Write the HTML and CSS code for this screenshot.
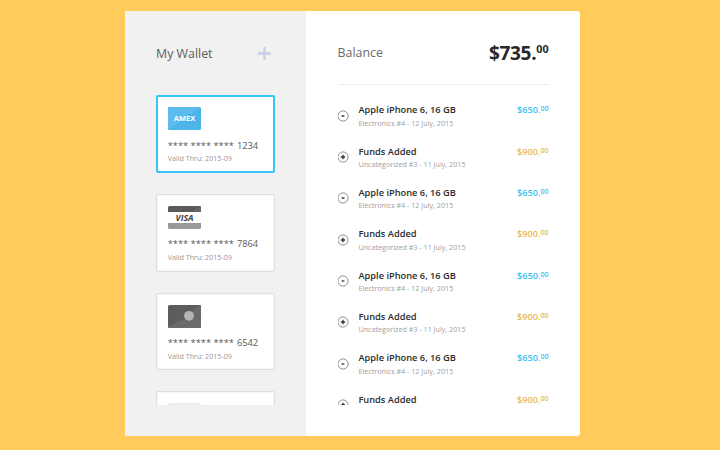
FILE: index.html
```html
<!DOCTYPE html>
<html lang="en">
<head>
<meta charset="utf-8">
<title>My Wallet</title>
<link rel="stylesheet" href="styles.css">
</head>
<body>
<main class="panel">
  <section class="wallet">
    <header class="wallet-head">
      <h1 class="heading">My Wallet</h1>
      <svg class="add" viewBox="0 0 13 13"><path d="M6.500 0v13M0 6.500h13"/></svg>
    </header>
    <div class="cards">
      <article class="card active">
        <svg class="logo" viewBox="0 0 33 23"><rect width="33" height="23" rx="1.5" fill="#4bb5ea"/><path d="M0 23V1.500Q0 0 1.500 0H33z" fill="#5dbcee"/><text class="amex" x="16.500" y="14.300" textLength="21.500" lengthAdjust="spacingAndGlyphs">AMEX</text></svg>
        <p class="number"><span class="stars">**** **** ****</span><span>1234</span></p>
        <p class="valid">Valid Thru: 2015-09</p>
      </article>
      <article class="card">
        <svg class="logo" viewBox="0 0 33 23"><path d="M0 6V1.500Q0 0 1.500 0h30Q33 0 33 1.500V6z" fill="#5b5b5b"/><path d="M24.500 6L33 0v6z" fill="#696969"/><path d="M0 17h33v4.500q0 1.500-1.500 1.500h-30Q0 23 0 21.500z" fill="#999"/><text class="visa" x="16.500" y="14.700" textLength="18" lengthAdjust="spacingAndGlyphs">VISA</text></svg>
        <p class="number"><span class="stars">**** **** ****</span><span>7864</span></p>
        <p class="valid">Valid Thru: 2015-09</p>
      </article>
      <article class="card">
        <svg class="logo" viewBox="0 0 33 23"><rect width="33" height="23" rx="1.500" fill="#5c5c5c"/><path d="M0 23L33 0v21.500q0 1.500-1.500 1.500z" fill="#6a6a6a"/><circle cx="12.500" cy="11" r="5" fill="#5f5f5f"/><circle cx="21" cy="10.800" r="4.900" fill="#b5b5b5"/></svg>
        <p class="number"><span class="stars">**** **** ****</span><span>6542</span></p>
        <p class="valid">Valid Thru: 2015-09</p>
      </article>
      <article class="card">
        <svg class="logo" viewBox="0 0 33 23"><rect width="33" height="23" rx="1.500" fill="#eee"/></svg>
      </article>
    </div>
  </section>
  <section class="balance">
    <header class="balance-head">
      <h2 class="heading">Balance</h2>
      <p class="total">$735.<span class="total-cents">00</span></p>
    </header>
    <ul class="list">
      <li class="row"><svg class="sign" viewBox="0 0 12 12"><circle cx="6" cy="6" r="5.100"/><path d="M4.600 6h2.800"/></svg><div class="info"><h3 class="title">Apple iPhone 6, 16 GB</h3><p class="meta">Electronics #4 - 12 July, 2015</p></div><p class="amount">$650.<span class="cents">00</span></p></li>
      <li class="row added"><svg class="sign" viewBox="0 0 12 12"><circle cx="6" cy="6" r="5.100"/><path d="M3.800 6h4.400M6 3.800v4.400"/></svg><div class="info"><h3 class="title">Funds Added</h3><p class="meta">Uncategorized #3 - 11 July, 2015</p></div><p class="amount">$900.<span class="cents">00</span></p></li>
      <li class="row"><svg class="sign" viewBox="0 0 12 12"><circle cx="6" cy="6" r="5.100"/><path d="M4.600 6h2.800"/></svg><div class="info"><h3 class="title">Apple iPhone 6, 16 GB</h3><p class="meta">Electronics #4 - 12 July, 2015</p></div><p class="amount">$650.<span class="cents">00</span></p></li>
      <li class="row added"><svg class="sign" viewBox="0 0 12 12"><circle cx="6" cy="6" r="5.100"/><path d="M3.800 6h4.400M6 3.800v4.400"/></svg><div class="info"><h3 class="title">Funds Added</h3><p class="meta">Uncategorized #3 - 11 July, 2015</p></div><p class="amount">$900.<span class="cents">00</span></p></li>
      <li class="row"><svg class="sign" viewBox="0 0 12 12"><circle cx="6" cy="6" r="5.100"/><path d="M4.600 6h2.800"/></svg><div class="info"><h3 class="title">Apple iPhone 6, 16 GB</h3><p class="meta">Electronics #4 - 12 July, 2015</p></div><p class="amount">$650.<span class="cents">00</span></p></li>
      <li class="row added"><svg class="sign" viewBox="0 0 12 12"><circle cx="6" cy="6" r="5.100"/><path d="M3.800 6h4.400M6 3.800v4.400"/></svg><div class="info"><h3 class="title">Funds Added</h3><p class="meta">Uncategorized #3 - 11 July, 2015</p></div><p class="amount">$900.<span class="cents">00</span></p></li>
      <li class="row"><svg class="sign" viewBox="0 0 12 12"><circle cx="6" cy="6" r="5.100"/><path d="M4.600 6h2.800"/></svg><div class="info"><h3 class="title">Apple iPhone 6, 16 GB</h3><p class="meta">Electronics #4 - 12 July, 2015</p></div><p class="amount">$650.<span class="cents">00</span></p></li>
      <li class="row added"><svg class="sign" viewBox="0 0 12 12"><circle cx="6" cy="6" r="5.100"/><path d="M3.800 6h4.400M6 3.800v4.400"/></svg><div class="info"><h3 class="title">Funds Added</h3></div><p class="amount">$900.<span class="cents">00</span></p></li>
    </ul>
  </section>
</main>
</body>
</html>
```
FILE: styles.css
```css
* { box-sizing: border-box; margin: 0; padding: 0; }
body {
  height: 450px;
  padding: 11px 0 0 125px;
  overflow: hidden;
  background: #ffcb5b;
  font-family: "Open Sans", sans-serif;
}
.panel {
  display: flex;
  width: 454.5px;
  height: 425px;
  border-radius: 0 3px 3px 0;
  overflow: hidden;
  background: #fff;
}
.wallet { width: 181px; padding: 0 31px; background: #f1f1f1; }
.wallet-head {
  display: flex;
  align-items: center;
  justify-content: space-between;
  height: 84px;
  padding-right: 4px;
}
.heading { padding-top: 1px; font-size: 12.4px; font-weight: 400; line-height: 18px; color: #5c5c5c; white-space: nowrap; }
.add { width: 13px; height: 13px; margin-top: 1px; fill: none; stroke: #c9cde9; stroke-width: 2.300; }
.cards {
  display: flex;
  flex-direction: column;
  gap: 20.800px;
  width: 119px;
  height: 310px;
  padding-top: 0.400px;
  overflow: hidden;
}
.card {
  flex: none;
  height: 77.800px;
  padding: 11px 10.700px 0;
  border: 1px solid #dedede;
  border-radius: 2px;
  background: #fff;
  box-shadow: inset 0 0 0 0.500px #eee;
}
.card.active { border: 2px solid #35c5f9; padding: 10px 9.700px 0; box-shadow: none; }
.logo { display: block; width: 33px; height: 23px; }
.amex, .visa { font-size: 7.500px; font-weight: 700; fill: #fff; text-anchor: middle; }
.visa { font-size: 8.300px; font-weight: 700; font-style: italic; fill: #444; }
.number {
  display: flex;
  justify-content: space-between;
  width: 90.500px;
  margin-top: 8.200px;
  font-size: 9.300px;
  line-height: 14px;
  color: #585858;
  white-space: nowrap;
}
.valid { margin-top: 0.800px; font-size: 7.150px; line-height: 10px; color: #999; white-space: nowrap; }
.balance { flex: 1; padding: 0 31px 0 31.5px; }
.balance-head {
  display: flex;
  align-items: center;
  justify-content: space-between;
  height: 74px;
  padding-top: 10px;
  border-bottom: 1px solid #eee;
}
.balance .heading { color: #6c6c6c; }
.total { display: flex; padding-top: 1px; font-size: 19px; font-weight: 700; line-height: 24px; letter-spacing: -0.300px; color: #282828; }
.total-cents { font-size: 10.700px; line-height: 16px; letter-spacing: 0; }
.list { height: 320px; padding-top: 18.300px; overflow: hidden; list-style: none; }
.row { display: flex; height: 41.350px; }
.sign { flex: none; width: 12px; height: 12px; margin: 6.400px 0 0 -0.500px; fill: none; stroke: #333; stroke-width: 1.300; }
.sign circle { stroke: #858585; stroke-width: 0.900; }
.info { flex: 1; padding-left: 9.400px; }
.title { font-size: 9.280px; font-weight: 600; line-height: 13px; color: #2c2c2c; white-space: nowrap; }
.meta { margin-top: 1.400px; font-size: 7.200px; line-height: 11px; color: #a0a0a0; white-space: nowrap; }
.amount { display: flex; font-size: 9.150px; font-weight: 600; line-height: 13px; color: #38c3f5; }
.cents { font-size: 7px; line-height: 12px; }
.added .amount { color: #ebb84c; }
```
